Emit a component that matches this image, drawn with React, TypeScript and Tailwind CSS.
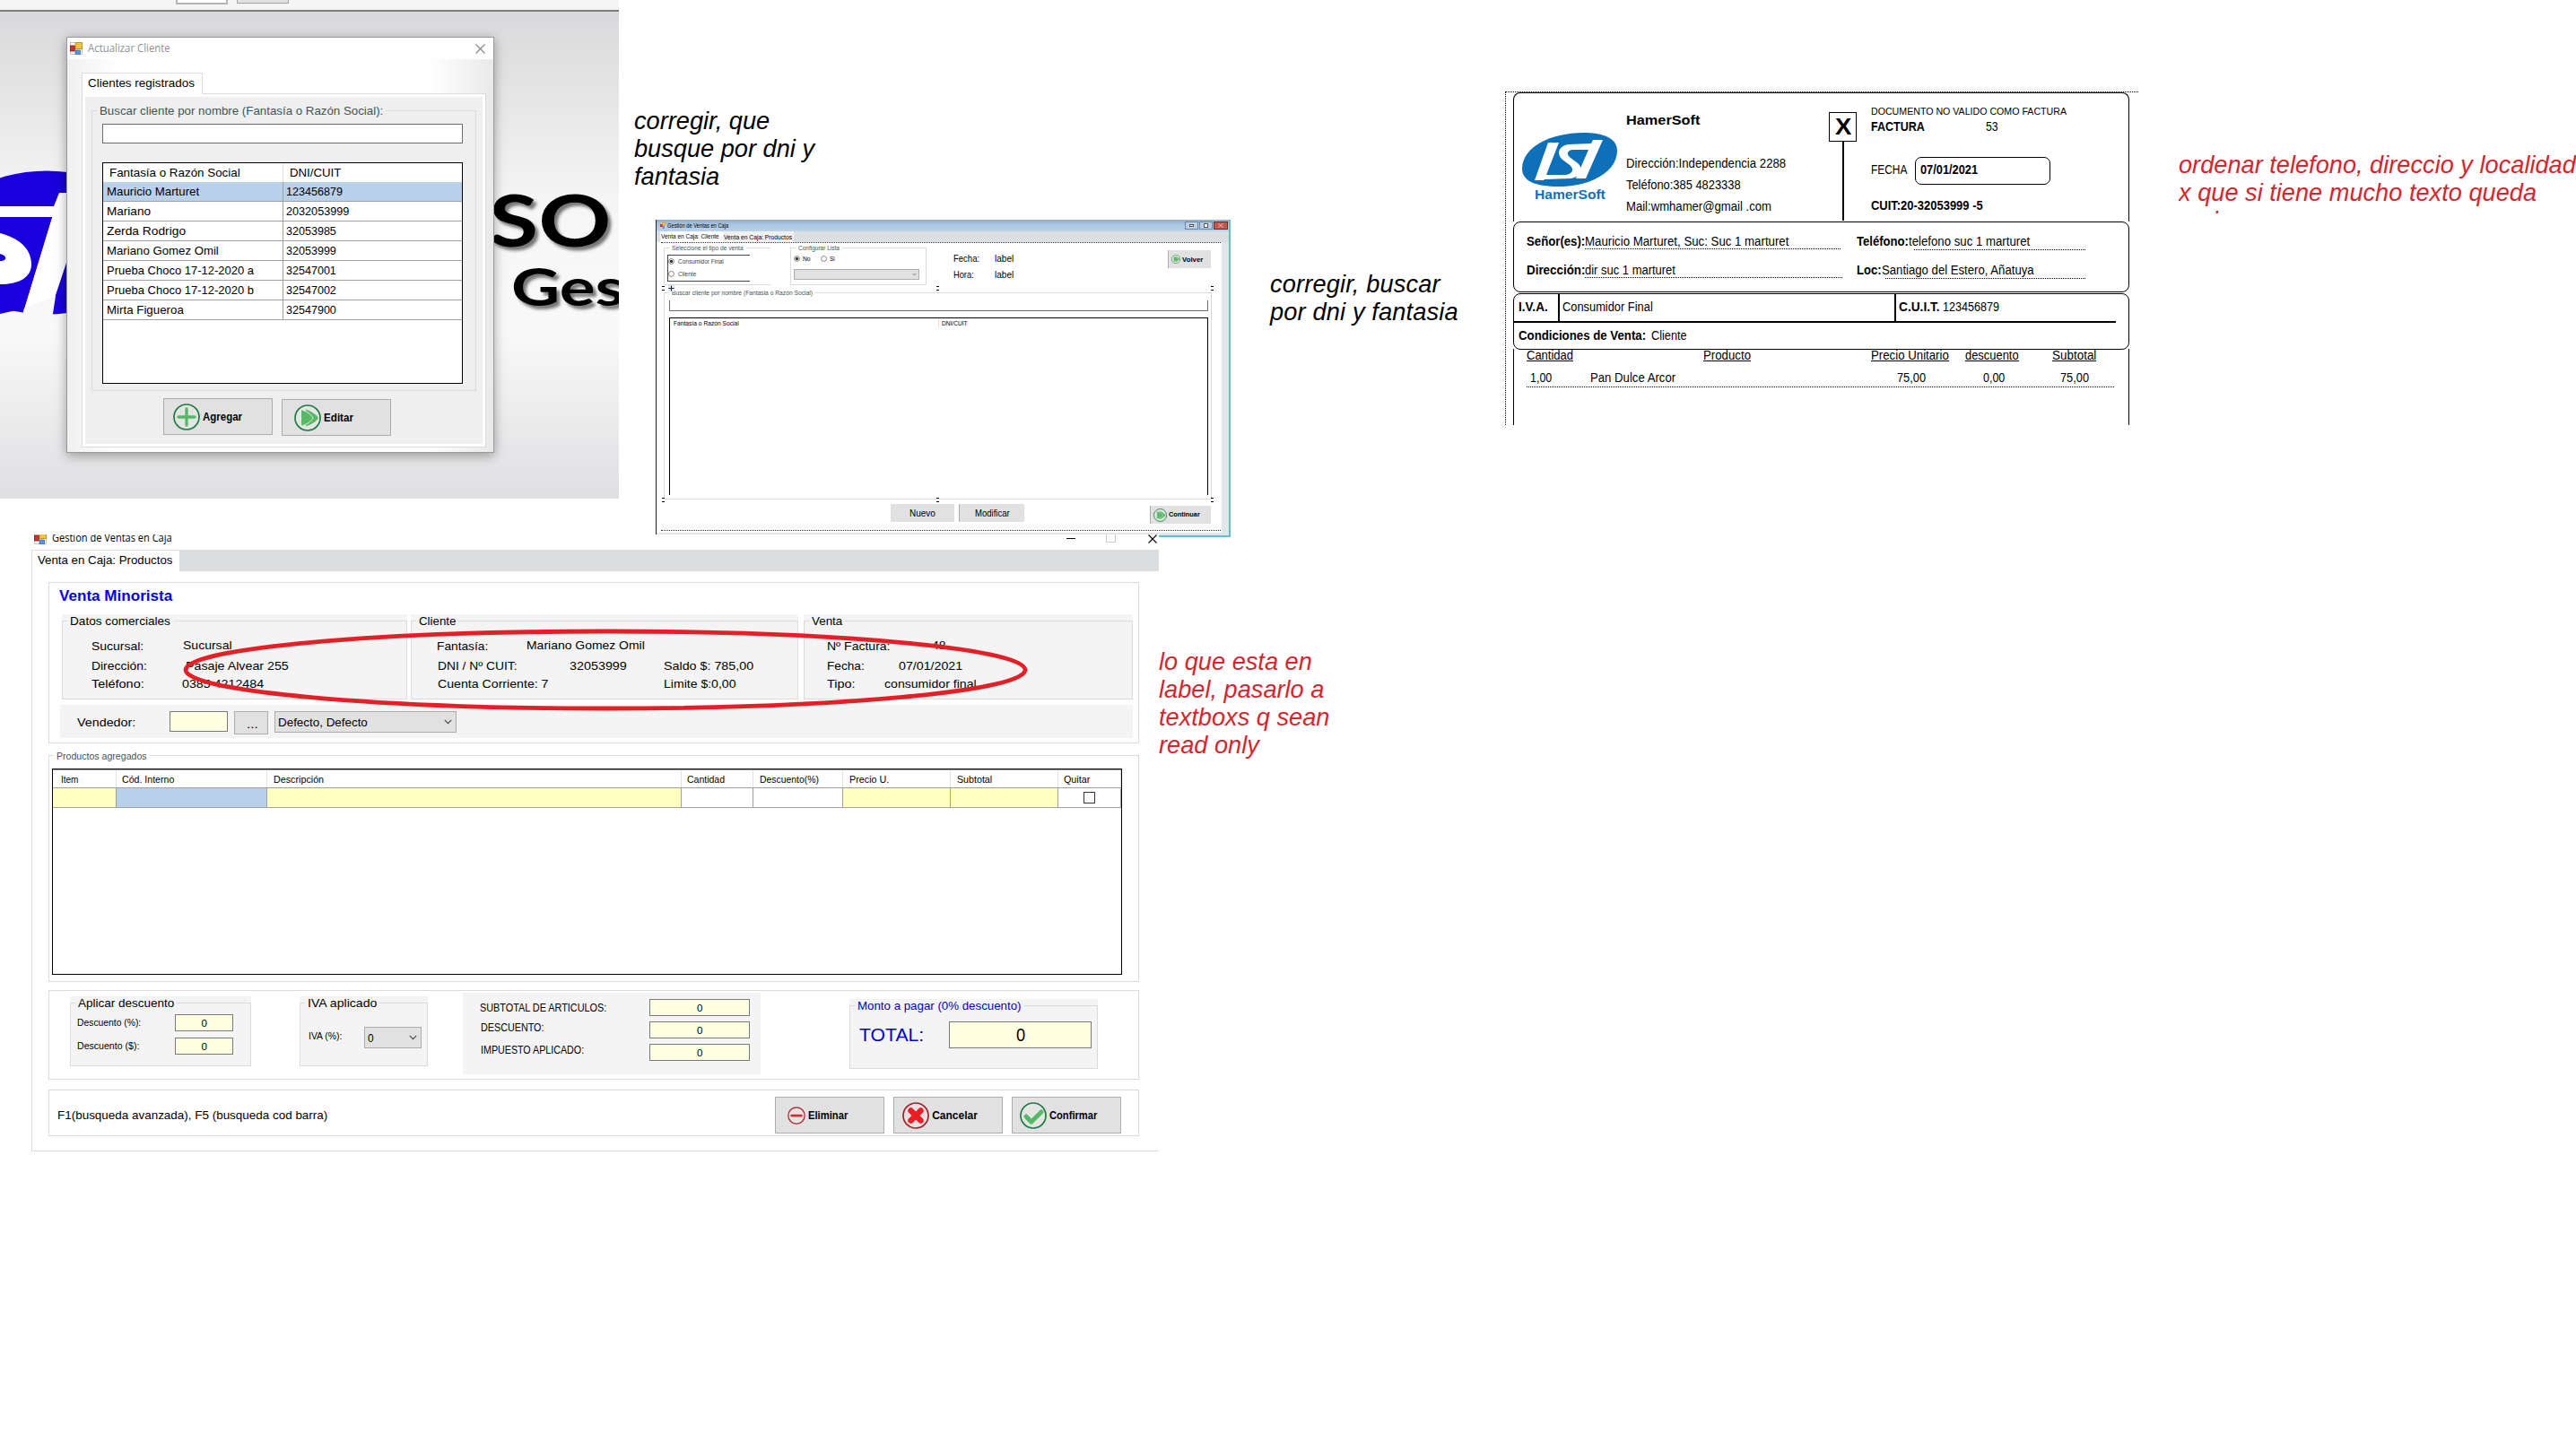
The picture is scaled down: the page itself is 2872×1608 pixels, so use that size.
import { useLayoutEffect, useRef, useState, type ReactNode } from "react";

/** A single line of text condensed or widened to an exact width. */
function T({ w, className = "", children }: { w: number; className?: string; children: ReactNode }) {
  const ref = useRef<HTMLSpanElement>(null);
  const [scale, setScale] = useState(1);
  useLayoutEffect(() => {
    const natural = ref.current?.offsetWidth ?? 0;
    if (natural > 0) setScale(w / natural);
  }, [w, children]);
  return (
    <span className={`inline-block shrink-0 whitespace-nowrap ${className}`} style={{ width: w }}>
      <span ref={ref} className="inline-block origin-left" style={{ transform: `scaleX(${scale})` }}>
        {children}
      </span>
    </span>
  );
}

function FormIcon({ className = "" }: { className?: string }) {
  return (
    <svg viewBox="0 0 14 14" preserveAspectRatio="none" className={`shrink-0 ${className}`}>
      <rect x="0.5" y="0.5" width="13" height="13" fill="#fff" stroke="#a9a9a9" strokeWidth="0.7" />
      <rect x="6" y="0.6" width="7.4" height="7" fill="#f5c33b" stroke="#b98512" strokeWidth="0.8" />
      <rect x="0.6" y="4" width="4.6" height="6" fill="#c8372d" stroke="#7c1612" strokeWidth="0.8" />
      <rect x="6" y="9" width="5.5" height="4.4" fill="#5b93e0" stroke="#2f62ad" strokeWidth="0.7" />
    </svg>
  );
}

function CloseX({ color, className = "" }: { color: string; className?: string }) {
  return (
    <svg viewBox="0 0 10 10" preserveAspectRatio="none" className={`shrink-0 ${className}`}>
      <path d="M0.5 0.5 9.5 9.5M9.5 0.5 0.5 9.5" stroke={color} strokeWidth="1.1" fill="none" />
    </svg>
  );
}

function Chevron({ className = "" }: { className?: string }) {
  return (
    <svg viewBox="0 0 9 6" className={`shrink-0 ${className}`}>
      <path d="M0.8 0.8 4.5 4.6 8.2 0.8" stroke="#444" strokeWidth="1.1" fill="none" />
    </svg>
  );
}

function PlusIcon({ className = "" }: { className?: string }) {
  return (
    <svg viewBox="0 0 30 30" className={`shrink-0 ${className}`}>
      <circle cx="15" cy="15" r="14" fill="#e3e6e3" stroke="#1f7a45" strokeWidth="1.7" />
      <path d="M15 6v18M6 15h18" stroke="#58b868" strokeWidth="3.4" strokeLinecap="round" />
    </svg>
  );
}

function PlayIcon({ className = "" }: { className?: string }) {
  return (
    <svg viewBox="0 0 30 30" className={`shrink-0 ${className}`}>
      <circle cx="15" cy="15" r="14" fill="#e3e6e3" stroke="#1f7a45" strokeWidth="1.7" />
      <path d="M13 5.5C20 8 25 12 27 15 25 18.500 20 22 13 24.500z" fill="#58b868" />
      <path d="M7.500 5.800C14 7 19 11.500 21 15 19 18.500 14 23 7.500 24.200z" fill="#58b868" stroke="#e3f2e4" strokeWidth="1" />
    </svg>
  );
}

function MinusIcon({ className = "" }: { className?: string }) {
  return (
    <svg viewBox="0 0 20 20" className={`shrink-0 ${className}`}>
      <circle cx="10" cy="10" r="9.200" fill="#e6e2e2" stroke="#a81e28" strokeWidth="1.200" />
      <path d="M4.500 10h11" stroke="#e8202a" strokeWidth="2.600" strokeLinecap="round" />
    </svg>
  );
}

function CrossIcon({ className = "" }: { className?: string }) {
  return (
    <svg viewBox="0 0 30 30" className={`shrink-0 ${className}`}>
      <circle cx="15" cy="15" r="14" fill="#e6e2e2" stroke="#a02028" strokeWidth="1.700" />
      <path d="M9.500 9.500l11 11M20.500 9.500l-11 11" stroke="#ee1c25" strokeWidth="6.500" strokeLinecap="round" />
    </svg>
  );
}

function CheckIcon({ className = "" }: { className?: string }) {
  return (
    <svg viewBox="0 0 30 30" className={`shrink-0 ${className}`}>
      <circle cx="15" cy="15" r="14" fill="#e3e6e3" stroke="#1f7a45" strokeWidth="1.700" />
      <path d="M7 16l5.800 6L24 11" stroke="#58b868" strokeWidth="5" strokeLinecap="round" strokeLinejoin="round" fill="none" />
    </svg>
  );
}

function Radio({ on = false, className = "" }: { on?: boolean; className?: string }) {
  return (
    <svg viewBox="0 0 8 8" className={`size-[7px] shrink-0 ${className}`}>
      <circle cx="4" cy="4" r="3.400" fill="#fff" stroke="#555" strokeWidth="0.800" />
      {on && <circle cx="4" cy="4" r="2" fill="#333" />}
    </svg>
  );
}

/** Titled frame whose top edge runs through its caption. */
function Group({
  title,
  w,
  className = "",
  frame = "",
  legend = "h-[14px] leading-[16px] text-[13px]",
  children,
}: {
  title: string;
  w: number;
  className?: string;
  frame?: string;
  legend?: string;
  children?: ReactNode;
}) {
  return (
    <div className={`shrink-0 ${className}`}>
      <fieldset className={`h-full w-full min-w-0 border border-[#dadbdd] ${frame}`}>
        <legend className={`ml-[5px] block px-[3px] ${legend}`}>
          <T w={w} className="align-top">{title}</T>
        </legend>
        {children}
      </fieldset>
    </div>
  );
}

function BigButton({ icon, label, w, className = "" }: { icon: ReactNode; label: string; w: number; className?: string }) {
  return (
    <button
      className={`flex h-[41px] w-[122px] shrink-0 items-center border border-[#adadad] bg-[#e1e1e1] text-[12px] leading-4 font-bold ${className}`}
    >
      {icon}
      <T w={w} className="mt-px ml-[3px]">{label}</T>
    </button>
  );
}

const clients: { name: string; w: number; id: string; idW: number }[] = [
  { name: "Mauricio Marturet", w: 103, id: "123456879", idW: 63 },
  { name: "Mariano", w: 49, id: "2032053999", idW: 70 },
  { name: "Zerda Rodrigo", w: 88, id: "32053985", idW: 56 },
  { name: "Mariano Gomez Omil", w: 125, id: "32053999", idW: 56 },
  { name: "Prueba Choco 17-12-2020 a", w: 164, id: "32547001", idW: 56 },
  { name: "Prueba Choco 17-12-2020 b", w: 164, id: "32547002", idW: 56 },
  { name: "Mirta Figueroa", w: 86, id: "32547900", idW: 56 },
];

function Backdrop() {
  return (
    <div className="absolute top-0 left-0 h-[556px] w-[690px] overflow-hidden bg-[linear-gradient(180deg,#d9d9db_13px,#f6f6f7_230px,#f9f9f9_370px,#dfdfe2_556px)]">
      <div className="flex h-[13px] border-b-2 border-[#7d7d7f] bg-[#f5f5f5] pl-[196px]">
        <div className="h-[5px] w-[58px] border-2 border-t-0 border-[#b5b5b5] bg-white" />
        <div className="ml-[10px] h-[4px] w-[58px] border border-t-0 border-[#a5a5a5] bg-[#e1e1e1]" />
      </div>
      <svg viewBox="0 0 80 170" className="absolute top-[186px] left-0 h-[170px] w-[80px]">
        <ellipse cx="52" cy="84.500" rx="120" ry="80" fill="#1a00dc" />
        <path d="M0 44H60L66 29H80V112L74 107 61 146 27 158 58 56H0z" fill="#fff" />
        <path d="M27 157 62 144 58 170H24z" fill="#f8f8f8" />
        <path d="M0 56H58L27 158 0 164z" fill="#1a00dc" />
        <path d="M0 74C20 79 34 90 35 107S20 131 0 131V105C9 105 8 99 0 97z" fill="#fff" />
      </svg>
      <div className="absolute top-[198px] left-[545px] font-['Lato'] text-[80px] leading-[92px] font-bold text-black [text-shadow:3px_4px_3px_#777]">
        <T w={137}>SO</T>
      </div>
      <div className="absolute top-[285px] left-[570px] font-['Lato'] text-[58px] leading-[68px] font-bold text-black [text-shadow:3px_4px_3px_#777]">
        <T w={126}>Ges</T>
      </div>
    </div>
  );
}

function ClientWindow() {
  return (
    <div className="absolute top-[41px] left-[74px] h-[464px] w-[477px] border border-[#9a9a9a] bg-[linear-gradient(90deg,#f0f0f1,#ffffff_12%,#ffffff_85%,#e9e9ea)] text-[13px] leading-4 text-black shadow-[0_3px_12px_rgba(0,0,0,0.35)]">
      <div className="flex h-[24px] items-center bg-white pl-[3px]">
        <FormIcon className="h-[14px] w-[14px]" />
        <T w={92} className="ml-[6px] font-['Open_Sans'] text-[12px] text-[#8f8f8f]">Actualizar Cliente</T>
        <CloseX color="#888" className="mr-[9px] ml-auto h-[11px] w-[11px]" />
      </div>
      <div className="mt-[15px] ml-[16px]">
        <div className="relative -mb-px flex h-[24px] w-[135px] items-center border border-b-0 border-[#dcdcdc] bg-white pl-[6px]">
          <T w={119} className="-mt-px">Clientes registrados</T>
        </div>
        <div className="h-[395px] w-[451px] border border-[#dcdcdc] bg-white p-[3px]">
          <div className="h-full overflow-hidden bg-[#efefef] pt-[8px]">
            <Group title="Buscar cliente por nombre (Fantasía o Razón Social):" w={316} className="ml-[7px] h-[320px] w-[429px]" legend="h-[14px] leading-[16px] text-[13px] text-[#3f5555]">
              <div className="mt-[8px] ml-[11px] h-[22px] w-[402px] border border-[#6d6d6d] bg-white" />
              <div className="mt-[21px] ml-[11px] h-[247px] w-[402px] border border-black bg-white">
                <div className="flex h-[21px] items-center">
                  <div className="flex h-full w-[201px] items-center border-r border-[#e0e0e0] pl-[7px]">
                    <T w={146}>Fantasía o Razón Social</T>
                  </div>
                  <T w={57} className="ml-[7px]">DNI/CUIT</T>
                </div>
                {clients.map((c, i) => (
                  <div key={c.name} className={`flex h-[22px] items-center border-b border-[#a0a0a0] ${i === 0 ? "bg-[#b9d1ea]" : "bg-white"}`}>
                    <div className="flex h-full w-[201px] items-center border-r border-[#a0a0a0] pl-[4px]">
                      <T w={c.w}>{c.name}</T>
                    </div>
                    <T w={c.idW} className="ml-[3px]">{c.id}</T>
                  </div>
                ))}
              </div>
            </Group>
            <div className="mt-[8px] flex gap-[10px] pl-[87px]">
              <BigButton icon={<PlusIcon className="ml-[10px] size-[30px]" />} label="Agregar" w={44} />
              <BigButton icon={<PlayIcon className="ml-[13px] size-[30px]" />} label="Editar" w={33} className="relative top-px" />
            </div>
          </div>
        </div>
      </div>
    </div>
  );
}

function Handles({ className = "" }: { className?: string }) {
  return (
    <div className={`absolute right-[9px] left-[6px] flex justify-between ${className}`}>
      {[0, 1, 2].map((i) => (
        <div key={i} className="h-[5px] w-[3px] border-y border-black" />
      ))}
    </div>
  );
}

function DesignerWindow() {
  return (
    <div className="absolute top-[245px] left-[731px] flex h-[354px] w-[641px] flex-col border-r-2 border-b-2 border-l border-r-[#5fbfcb] border-b-[#5fbfcb] border-l-[#1c2430] bg-[#e3e6e8] text-[7.5px] leading-[9px] text-black">
      <div className="flex h-[13px] items-center bg-[linear-gradient(180deg,#8fabc9,#a9c5e2_40%,#bcd3ea)] pl-[4px]">
        <FormIcon className="h-[7px] w-[6px]" />
        <T w={68} className="ml-[2px]">Gestión de Ventas en Caja</T>
        <div className="mr-[1px] ml-auto flex gap-px">
          <div className="flex h-[9px] w-[15px] items-center justify-center border border-[#6b87a8] bg-[#b9cfe6]">
            <div className="h-[3px] w-[5px] border border-[#555] bg-white" />
          </div>
          <div className="flex h-[9px] w-[15px] items-center justify-center border border-[#6b87a8] bg-[#b9cfe6]">
            <div className="h-[5px] w-[5px] border border-[#555] bg-white" />
          </div>
          <div className="flex h-[9px] w-[16px] items-center justify-center border border-[#6e2a24] bg-[#c4564a]">
            <CloseX color="#fff" className="h-[5px] w-[6px]" />
          </div>
        </div>
      </div>
      <div className="flex h-[12px] items-center bg-[#dcdfe1] pl-[4px]">
        <div className="flex h-full w-[70px] items-center bg-white pl-px">
          <T w={65} className="-mt-px">Venta en Caja: Cliente</T>
        </div>
        <div className="flex h-full w-[79px] items-center bg-[#f0f0f0] pl-px">
          <T w={76}>Venta en Caja: Productos</T>
        </div>
      </div>
      <div className="relative h-[324px] w-[630px] overflow-hidden bg-white">
        <div className="ml-[5px] h-px w-[624px] border-t border-dotted border-[#333]" />
        <div className="mt-px flex h-[46px] items-start pl-[8px]">
          <Group title="Seleccione el tipo de venta" w={80} className="h-[46px] w-[119px]" frame="border-r-0" legend="-ml-[0px] h-[8px] leading-[9px] text-[#3f5555]">
            <div className="mt-[4px] ml-[3px] h-[30px] w-[92px] border border-r-0 border-[#444] pt-[2px]">
              <div className="flex h-[9px] items-center">
                <Radio on />
                <T w={51} className="ml-[4px] text-[#444]">Consumidor Final</T>
              </div>
              <div className="mt-[5px] flex h-[9px] items-center">
                <Radio />
                <T w={20} className="ml-[4px] text-[#444]">Cliente</T>
              </div>
            </div>
          </Group>
          <Group title="Configurar Lista" w={46} className="ml-[22px] h-[46px] w-[152px]" legend="h-[8px] leading-[9px] text-[#3f5555]">
            <div className="mt-[4px] flex h-[9px] items-center pl-[3px]">
              <Radio on />
              <T w={9} className="ml-[3px]">No</T>
              <Radio className="ml-[11px]" />
              <T w={6} className="ml-[3px]">Si</T>
            </div>
            <div className="mt-[7px] ml-[3px] flex h-[12px] w-[140px] items-center justify-end border border-[#adadad] bg-[#e1e1e1] pr-[2px]">
              <Chevron className="h-[4px] w-[5px]" />
            </div>
          </Group>
          <div className="ml-[30px] text-[10.5px] leading-[12px]">
            <div className="mt-[10px] flex">
              <T w={29}>Fecha:</T>
              <T w={21} className="ml-[17px]">label</T>
            </div>
            <div className="mt-[6px] flex">
              <T w={23}>Hora:</T>
              <T w={21} className="ml-[23px]">label</T>
            </div>
          </div>
          <button className="mt-[7px] ml-[172px] flex h-[20px] w-[48px] items-center border-l border-[#adadad] bg-[#e1e1e1] font-bold">
            <PlayIcon className="ml-[3px] size-[10px]" />
            <T w={23} className="ml-[2px]">Volver</T>
          </button>
        </div>
        <Group title="Buscar cliente por nombre (Fantasia o Razón Social)" w={157} className="mt-[4px] ml-[8px] h-[235px] w-[611px]" legend="h-[8px] leading-[9px] text-[#3f5555]">
          <div className="mt-[5px] ml-[5px] h-[12px] w-[601px] border border-t-0 border-[#6d6d6d]" />
          <div className="mt-[7px] ml-[5px] h-[198px] w-[601px] border border-b-0 border-black">
            <div className="flex h-[10px] items-center">
              <div className="flex h-full w-[300px] items-center border-r border-[#e0e0e0] pl-[4px]">
                <T w={73}>Fantasía o Razón Social</T>
              </div>
              <T w={29} className="ml-[3px]">DNI/CUIT</T>
            </div>
          </div>
        </Group>
        <div className="mt-[5px] flex items-start pl-[261px] text-[11px] leading-[12px]">
          <button className="h-[20px] w-[71px] bg-[#e1e1e1]"><T w={29}>Nuevo</T></button>
          <button className="ml-[5px] h-[20px] w-[73px] border-l border-[#adadad] bg-[#e1e1e1]"><T w={39}>Modificar</T></button>
          <button className="mt-[2px] ml-[140px] flex h-[20px] w-[68px] items-center border-l border-[#adadad] bg-[#e1e1e1] text-[8px] font-bold">
            <PlayIcon className="ml-[3px] size-[15px]" />
            <T w={35} className="ml-[2px]">Continuar</T>
          </button>
        </div>
        <div className="mt-[7px] ml-[5px] h-px w-[624px] border-t border-dotted border-[#333]" />
        <Handles className="top-[49px]" />
        <Handles className="top-[285px]" />
        <svg viewBox="0 0 7 7" className="absolute top-[48px] left-[13px] size-[7px]">
          <rect width="7" height="7" fill="#dfe6f0" />
          <path d="M3.500 0.500v6M0.500 3.500h6" stroke="#223" strokeWidth="1" />
        </svg>
      </div>
    </div>
  );
}

function Field({ className = "", children }: { className?: string; children?: ReactNode }) {
  return (
    <div className={`flex shrink-0 items-center justify-center border border-[#7a7a7a] bg-[#ffffe1] ${className}`}>{children}</div>
  );
}

const columns: { title: string; w: number; head: string; cell: string }[] = [
  { title: "Item", w: 19, head: "pl-[9px]", cell: "bg-[#ffffc1]" },
  { title: "Cód. Interno", w: 58, head: "pl-[6px]", cell: "bg-[#b9d1ea]" },
  { title: "Descripción", w: 56, head: "pl-[7px]", cell: "bg-[#ffffc1]" },
  { title: "Cantidad", w: 42, head: "pl-[6px]", cell: "bg-white" },
  { title: "Descuento(%)", w: 66, head: "pl-[7px]", cell: "bg-white" },
  { title: "Precio U.", w: 44, head: "pl-[7px]", cell: "bg-[#ffffc1]" },
  { title: "Subtotal", w: 39, head: "pl-[7px]", cell: "bg-[#ffffc1]" },
  { title: "Quitar", w: 29, head: "pl-[6px]", cell: "bg-white" },
];

function SalesWindow() {
  const row = "flex h-[22px] items-center";
  return (
    <div className="absolute top-[596px] left-[35px] h-[688px] w-[1257px] bg-white text-[13px] leading-4 text-black">
      <div className="flex h-[17px] items-start overflow-hidden pl-[3px]">
        <FormIcon className="-mt-[3px] h-[14px] w-[14px]" />
        <T w={134} className="-mt-[4px] ml-[6px] font-['Open_Sans'] text-[12px]">Gestión de Ventas en Caja</T>
        <div className="mr-[2px] ml-auto flex items-start">
          <div className="mt-[4px] h-px w-[10px] bg-black" />
          <div className="ml-[34px] h-[9px] w-[11px] border border-t-0 border-[#cccccc]" />
          <CloseX color="#000" className="ml-[36px] h-[10px] w-[10px]" />
        </div>
      </div>
      <div className="h-[671px] border-b border-l border-[#d9d9dc]">
        <div className="flex h-[24px] bg-[#dcdddf]">
          <div className="flex h-full w-[164px] items-center border-t border-[#dcdddf] bg-white pl-[6px]">
            <T w={150} className="-mt-[2px]">Venta en Caja: Productos</T>
          </div>
        </div>
        <div className="ml-[18px] w-[1216px]">
          <section className="mt-[12px] h-[180px] border border-[#dadbdd] pt-[5px]">
            <h1 className="flex h-[20px] items-center pl-[11px] text-[16px] font-bold text-[#0000f0]">
              <T w={126}>Venta Minorista</T>
            </h1>
            <div className="mt-[10px] flex pl-[14px]">
              <Group title="Datos comerciales" w={112} className="h-[95px] w-[385px] bg-[#f4f4f4]">
                <div className="mt-[11px] pl-[32px]">
                  <div className={row}>
                    <T w={58}>Sucursal:</T>
                    <T w={55} className="-mt-[2px] ml-[44px]">Sucursal</T>
                  </div>
                  <div className={row}>
                    <T w={62}>Dirección:</T>
                    <T w={115} className="ml-[43px]">Pasaje Alvear 255</T>
                  </div>
                  <div className="flex h-[18px] items-center">
                    <T w={59}>Teléfono:</T>
                    <T w={91} className="ml-[42px]">0385 4212484</T>
                  </div>
                </div>
              </Group>
              <Group title="Cliente" w={41} className="ml-[4px] h-[95px] w-[432px] bg-[#f4f4f4]">
                <div className="mt-[11px] pl-[28px]">
                  <div className={row}>
                    <T w={57}>Fantasía:</T>
                    <T w={132} className="-mt-[2px] ml-[43px]">Mariano Gomez Omil</T>
                  </div>
                  <div className={row}>
                    <T w={88} className="ml-px">DNI / Nº CUIT:</T>
                    <T w={64} className="ml-[59px]">32053999</T>
                    <T w={100} className="ml-[41px]">Saldo $: 785,00</T>
                  </div>
                  <div className="flex h-[18px] items-center">
                    <T w={123} className="ml-px">Cuenta Corriente: 7</T>
                    <T w={80} className="ml-[129px]">Limite $:0,00</T>
                  </div>
                </div>
              </Group>
              <Group title="Venta" w={34} className="ml-[6px] h-[95px] w-[367px] bg-[#f4f4f4]">
                <div className="mt-[11px] pl-[25px]">
                  <div className={row}>
                    <T w={70}>Nº Factura:</T>
                    <T w={15} className="-mt-[2px] ml-[47px]">48</T>
                  </div>
                  <div className={row}>
                    <T w={42}>Fecha:</T>
                    <T w={71} className="ml-[38px]">07/01/2021</T>
                  </div>
                  <div className="flex h-[18px] items-center">
                    <T w={31}>Tipo:</T>
                    <T w={103} className="ml-[33px]">consumidor final</T>
                  </div>
                </div>
              </Group>
            </div>
            <div className="mt-[6px] ml-[12px] flex h-[37px] w-[1196px] items-start bg-[#f4f4f4] pt-[7px] pl-[19px]">
              <T w={65} className="mt-[5px]">Vendedor:</T>
              <Field className="ml-[38px] h-[23px] w-[65px]" />
              <button className="ml-[7px] h-[26px] w-[38px] border border-[#adadad] bg-[#e1e1e1] pt-[3px]"><T w={13}>...</T></button>
              <div className="ml-[7px] flex h-[24px] w-[203px] items-center border border-[#adadad] bg-[#e1e1e1] pr-[4px] pl-[3px]">
                <T w={100} className="mt-px">Defecto, Defecto</T>
                <Chevron className="ml-auto h-[6px] w-[9px]" />
              </div>
            </div>
          </section>

          <Group title="Productos agregados" w={101} className="mt-[7px] h-[259px]" legend="h-[12px] leading-[14px] text-[11px] text-[#3f5555]">
            <div className="mt-[9px] ml-[3px] h-[230px] w-[1193px] border border-black text-[11.5px]">
              <div className="grid h-[21px] grid-cols-[71px_168px_462px_80px_100px_120px_120px_1fr] border-t border-b border-[#a0a0a0]">
                {columns.map((c) => (
                  <div key={c.title} className={`flex items-center border-r border-[#e3e3e3] pt-px ${c.head}`}>
                    <T w={c.w}>{c.title}</T>
                  </div>
                ))}
              </div>
              <div className="grid h-[22px] grid-cols-[71px_168px_462px_80px_100px_120px_120px_1fr] border-b border-[#a0a0a0]">
                {columns.map((c) => (
                  <div key={c.title} className={`flex items-center justify-center border-r border-[#a0a0a0] ${c.cell}`}>
                    {c.title === "Quitar" && <div className="h-[13px] w-[13px] border border-[#333] bg-white" />}
                  </div>
                ))}
              </div>
            </div>
          </Group>

          <section className="mt-[9px] flex h-[100px] items-start border border-[#dadbdd] text-[11.5px]">
            <Group title="Aplicar descuento" w={107} className="mt-[6px] ml-[23px] h-[78px] w-[202px] bg-[#f4f4f4]">
              <div className="mt-[6px] flex h-[19px] items-center pl-[7px]">
                <T w={71} className="-mt-px">Descuento (%):</T>
                <Field className="ml-[38px] h-[19px] w-[65px]"><T w={6}>0</T></Field>
              </div>
              <div className="mt-[7px] flex h-[19px] items-center pl-[7px]">
                <T w={69} className="-mt-px">Descuento ($):</T>
                <Field className="ml-[40px] h-[19px] w-[65px]"><T w={6}>0</T></Field>
              </div>
            </Group>
            <Group title="IVA aplicado" w={77} className="mt-[6px] ml-[54px] h-[78px] w-[143px] bg-[#f4f4f4]">
              <div className="mt-[20px] flex h-[24px] items-center pl-[9px]">
                <T w={37} className="-mt-[5px]">IVA (%):</T>
                <div className="ml-[25px] flex h-[24px] w-[64px] items-center border border-[#adadad] bg-[#e1e1e1] pr-[4px] pl-[3px] text-[13.5px]">
                  <T w={7} className="mt-px">0</T>
                  <Chevron className="ml-auto h-[6px] w-[9px]" />
                </div>
              </div>
            </Group>
            <div className="mt-[2px] ml-[39px] flex h-[91px] w-[332px] shrink-0 flex-col gap-[6px] bg-[#f4f4f4] pt-[7px] pl-[19px] text-[12px]">
              <div className="flex h-[19px] items-center">
                <T w={141}>SUBTOTAL DE ARTICULOS:</T>
                <Field className="ml-[48px] h-[19px] w-[112px] text-[11.5px]"><T w={6}>0</T></Field>
              </div>
              <div className="flex h-[19px] items-center">
                <T w={70} className="-mt-[6px] ml-px">DESCUENTO:</T>
                <Field className="ml-[118px] h-[19px] w-[112px] text-[11.5px]"><T w={6}>0</T></Field>
              </div>
              <div className="flex h-[19px] items-center">
                <T w={115} className="-mt-[6px] ml-px">IMPUESTO APLICADO:</T>
                <Field className="ml-[73px] h-[19px] w-[112px] text-[11.5px]"><T w={6}>0</T></Field>
              </div>
            </div>
            <Group title="Monto a pagar (0% descuento)" w={183} className="mt-[9px] ml-[99px] h-[78px] w-[277px] bg-[#f4f4f4]" legend="h-[14px] leading-[16px] text-[13px] text-[#0000c8]">
              <div className="mt-[11px] flex h-[30px] items-center pl-[10px] text-[20px] leading-6">
                <T w={72} className="text-[#0000c8]">TOTAL:</T>
                <Field className="ml-[28px] h-[30px] w-[159px]"><T w={10} className="-mt-px">0</T></Field>
              </div>
            </Group>
          </section>

          <section className="mt-[11px] flex h-[52px] items-start border border-[#dadbdd] pt-[7px] pl-[9px]">
            <T w={301} className="mt-[13px]">F1(busqueda avanzada), F5 (busqueda cod barra)</T>
            <BigButton icon={<MinusIcon className="ml-[13px] size-[20px]" />} label="Eliminar" w={44} className="ml-[499px]" />
            <BigButton icon={<CrossIcon className="ml-[9px] size-[30px]" />} label="Cancelar" w={51} className="ml-[10px]" />
            <BigButton icon={<CheckIcon className="ml-[8px] size-[30px]" />} label="Confirmar" w={53} className="ml-[10px]" />
          </section>
        </div>
      </div>
      <svg viewBox="0 0 944 94" className="absolute top-[104px] left-[168px] h-[94px] w-[944px]">
        <ellipse cx="472" cy="47" rx="468" ry="43" fill="none" stroke="#e61e26" strokeWidth="4.800" />
      </svg>
    </div>
  );
}

function HamerLogo() {
  return (
    <svg viewBox="0 0 106 60" className="h-[60px] w-[106px]">
      <path d="M106 20C106 44 76 60 40 60 15 60 0 54 0 40 0 16 32 0 68 0 92 0 106 7 106 20z" fill="#0f70ba" />
      <path d="M29 11H41L27 47H49C57 46 58 40 53 36L45 30C37 23 42 14 52 13L77 12 79 8H90L71 51H60L74 19H56C50 20 49 24 54 28L62 34C69 40 65 50 54 51L25 52 24 53H14z" fill="#fff" />
    </svg>
  );
}

function Invoice() {
  const box = "w-[687px] border border-black";
  return (
    <div className="absolute top-[102px] left-[1678px] h-[372px] w-[706px] overflow-hidden border-t border-l border-dotted border-black pl-[8px] text-[14px] leading-4 text-black">
      <div className={`${box} flex h-[144px] items-start rounded-t-[8px] border-b-0 border-solid`}>
        <div className="w-[125px] shrink-0 pt-[44px] pl-[9px]">
          <HamerLogo />
          <T w={79} className="mt-px ml-[14px] font-bold text-[#0f70ba]">HamerSoft</T>
        </div>
        <div className="flex w-[226px] shrink-0 flex-col pt-[22px]">
          <T w={82} className="text-[15.5px] font-bold">HamerSoft</T>
          <T w={178} className="mt-[28px] leading-6">Dirección:Independencia 2288</T>
          <T w={128} className="leading-6">Teléfono:385 4823338</T>
          <T w={162} className="leading-6">Mail:wmhamer@gmail .com</T>
        </div>
        <div className="flex w-[31px] shrink-0 flex-col items-center pt-[21px]">
          <div className="flex h-[33px] w-[31px] items-center justify-center border border-solid border-black pb-px text-[26px] leading-none font-bold">
            <T w={18}>X</T>
          </div>
          <div className="h-[88px] w-[2px] bg-black" />
        </div>
        <div className="ml-[16px] pt-[12px]">
          <div className="h-[16px] text-[11.5px]"><T w={218}>DOCUMENTO NO VALIDO COMO FACTURA</T></div>
          <div className="flex h-[18px] items-center">
            <T w={60} className="font-bold">FACTURA</T>
            <T w={14} className="ml-[68px]">53</T>
          </div>
          <div className="mt-[25px] flex h-[31px] items-center">
            <T w={40} className="-mt-[4px]">FECHA</T>
            <div className="ml-[9px] flex h-[31px] w-[151px] items-center rounded-[7px] border border-solid border-black pb-[4px] pl-[5px] font-bold">
              <T w={64}>07/01/2021</T>
            </div>
          </div>
          <T w={125} className="mt-[15px] font-bold">CUIT:20-32053999 -5</T>
        </div>
      </div>
      <div className={`${box} flex h-[79px] rounded-[8px] border-solid`}>
        <div className="w-[368px] shrink-0 pt-[13px] pl-[14px]">
          <div className="flex items-start">
            <T w={65} className="font-bold">Señor(es):</T>
            <div className="h-[17px] w-[285px] border-b border-dotted border-black"><T w={227}>Mauricio Marturet, Suc: Suc 1 marturet</T></div>
          </div>
          <div className="mt-[15px] flex items-start">
            <T w={65} className="font-bold">Dirección:</T>
            <div className="h-[17px] w-[287px] border-b border-dotted border-black"><T w={101}>dir suc 1 marturet</T></div>
          </div>
        </div>
        <div className="pt-[13px] pl-[14px]">
          <div className="flex items-start">
            <T w={58} className="font-bold">Teléfono:</T>
            <div className="ml-[6px] h-[18px] w-[191px] border-b border-dotted border-black"><T w={135} className="-ml-[6px]">telefono suc 1 marturet</T></div>
          </div>
          <div className="mt-[14px] flex items-start">
            <T w={28} className="font-bold">Loc:</T>
            <div className="ml-[4px] h-[18px] w-[223px] border-b border-dotted border-black"><T w={170} className="-ml-[4px]">Santiago del Estero, Añatuya</T></div>
          </div>
        </div>
      </div>
      <div className={`${box} mt-px h-[63px] rounded-[8px] border-solid`}>
        <div className="flex h-[30px] items-center pl-[5px]">
          <T w={33} className="-mt-[3px] font-bold">I.V.A.</T>
          <div className="ml-[11px] flex h-full w-[375px] items-center border-l-2 border-black pl-[3px]"><T w={101} className="-mt-[3px]">Consumidor Final</T></div>
          <div className="flex h-full items-center border-l-2 border-black pl-[3px]">
            <T w={46} className="-mt-[3px] font-bold">C.U.I.T.</T>
            <T w={63} className="-mt-[3px] ml-[3px]">123456879</T>
          </div>
        </div>
        <div className="-ml-px h-[2px] w-[672px] bg-black" />
        <div className="flex h-[28px] items-center pl-[5px]">
          <T w={142} className="-mt-px font-bold">Condiciones de Venta:</T>
          <T w={40} className="-mt-px ml-[6px]">Cliente</T>
        </div>
      </div>
      <div className="h-[90px] w-[687px] border-x border-solid border-black pl-[14px]">
        <div className="-mt-px flex h-[14px] text-[14px] leading-[14px]">
          <T w={52} className="border-b border-black">Cantidad</T>
          <T w={53} className="ml-[145px] border-b border-black">Producto</T>
          <T w={87} className="ml-[134px] border-b border-black">Precio Unitario</T>
          <T w={60} className="ml-[18px] border-b border-black">descuento</T>
          <T w={49} className="ml-[37px] border-b border-black">Subtotal</T>
        </div>
        <div className="flex h-[29px] w-[655px] items-center border-b border-dotted border-black pt-[8px] pl-[4px]">
          <T w={24}>1,00</T>
          <T w={95} className="ml-[43px]">Pan Dulce Arcor</T>
          <T w={32} className="ml-[247px]">75,00</T>
          <T w={24} className="ml-[64px]">0,00</T>
          <T w={32} className="ml-[62px]">75,00</T>
        </div>
      </div>
    </div>
  );
}

function Note({ lines, className = "" }: { lines: string[]; className?: string }) {
  return (
    <div className={`absolute text-[27.2px] leading-[31px] whitespace-nowrap italic ${className}`}>
      {lines.map((l) => (
        <p key={l}>{l}</p>
      ))}
    </div>
  );
}

export default function App() {
  return (
    <main className="relative h-[1608px] w-[2872px] overflow-hidden bg-white font-['Liberation_Sans',Arial,sans-serif]">
      <Backdrop />
      <ClientWindow />
      <Note lines={["corregir, que", "busque por dni y", "fantasia"]} className="top-[119px] left-[707px] text-black" />
      <DesignerWindow />
      <Note lines={["corregir, buscar", "por dni y fantasia"]} className="top-[301px] left-[1416px] tracking-[0.15px] text-black" />
      <SalesWindow />
      <Note lines={["lo que esta en", "label, pasarlo a", "textboxs q sean", "read only"]} className="top-[722px] left-[1292px] text-[#d8242c]" />
      <Invoice />
      <Note lines={["ordenar telefono, direccio y localidad", "x que si tiene mucho texto queda", "mal"]} className="top-[168px] left-[2429px] h-[70px] overflow-hidden text-[#d8242c]" />
    </main>
  );
}
